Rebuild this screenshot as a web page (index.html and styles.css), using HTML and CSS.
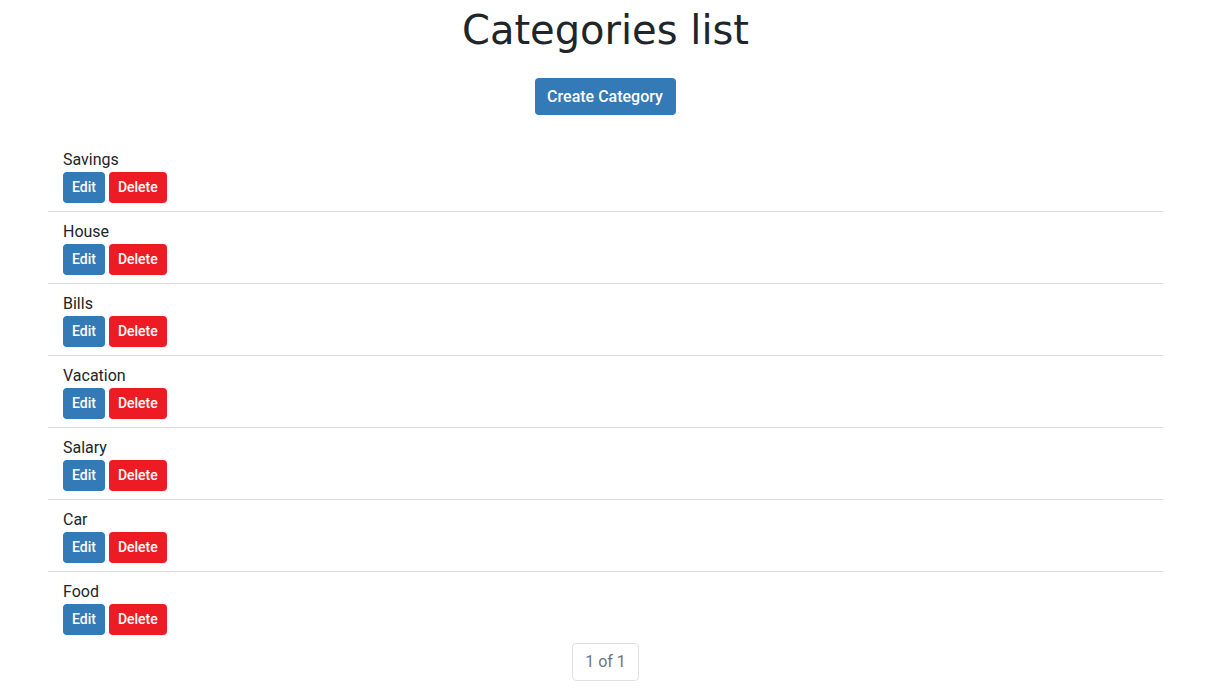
FILE: index.html
```html
<!DOCTYPE html>
<html>
<head>
<meta charset="utf-8">
<link rel="stylesheet" href="styles.css">
</head>
<body>
<div class="container">
  <h1 class="title">Categories list</h1>
  <div class="actions"><button class="btn btn-primary btn-create">Create Category</button></div>
  <ul class="list">
    <li class="item"><div class="name">Savings</div><div class="btns"><button class="btn btn-sm btn-primary">Edit</button><button class="btn btn-sm btn-danger">Delete</button></div></li>
    <li class="item"><div class="name">House</div><div class="btns"><button class="btn btn-sm btn-primary">Edit</button><button class="btn btn-sm btn-danger">Delete</button></div></li>
    <li class="item"><div class="name">Bills</div><div class="btns"><button class="btn btn-sm btn-primary">Edit</button><button class="btn btn-sm btn-danger">Delete</button></div></li>
    <li class="item"><div class="name">Vacation</div><div class="btns"><button class="btn btn-sm btn-primary">Edit</button><button class="btn btn-sm btn-danger">Delete</button></div></li>
    <li class="item"><div class="name">Salary</div><div class="btns"><button class="btn btn-sm btn-primary">Edit</button><button class="btn btn-sm btn-danger">Delete</button></div></li>
    <li class="item"><div class="name">Car</div><div class="btns"><button class="btn btn-sm btn-primary">Edit</button><button class="btn btn-sm btn-danger">Delete</button></div></li>
    <li class="item"><div class="name">Food</div><div class="btns"><button class="btn btn-sm btn-primary">Edit</button><button class="btn btn-sm btn-danger">Delete</button></div></li>
  </ul>
  <div class="pager"><span class="page">1 of 1</span></div>
</div>
</body>
</html>
```
FILE: styles.css
```css
html, body {
  margin: 0;
  padding: 0;
  background: #fff;
}
body {
  font-family: Roboto, "Liberation Sans", sans-serif;
  font-size: 16px;
  line-height: 1.5;
  color: #212529;
}
.container {
  width: 1115px;
  margin: 0 0 0 48px;
}
.title {
  margin: 0;
  padding-top: 6px;
  font-family: "DejaVu Sans", sans-serif;
  font-weight: 500;
  font-size: 40px;
  line-height: 48px;
  text-align: center;
  color: #212529;
}
.actions {
  display: flex;
  justify-content: center;
  margin-top: 24px;
}
.btn {
  font-family: Roboto, "Liberation Sans", sans-serif;
  border: none;
  border-radius: 4px;
  color: #fff;
  cursor: pointer;
  white-space: nowrap;
}
.btn-create {
  font-size: 16px;
  line-height: 24px;
  padding: 7px 13px 6px 12px;
  font-weight: 500;
}
.btn-primary { background: #337ab7; }
.btn-danger { background: #ed1c24; }
.list {
  list-style: none;
  margin: 25px 0 0;
  padding: 0;
}
.item {
  padding: 8px 15px;
  border-bottom: 1px solid #dcdcdc;
}
.item:last-child { border-bottom: none; }
.name {
  line-height: 24px;
}
.btns {
  display: flex;
  gap: 4px;
}
.btn-sm {
  font-size: 14px;
  font-weight: 500;
  line-height: 21px;
  padding: 5px 9px;
}
.pager {
  display: flex;
  justify-content: center;
}
.page {
  border: 1px solid #dee2e6;
  border-radius: 4px;
  padding: 6px 12px 6px 12px;
  white-space: nowrap;
  color: #6c757d;
  line-height: 24px;
}
```
